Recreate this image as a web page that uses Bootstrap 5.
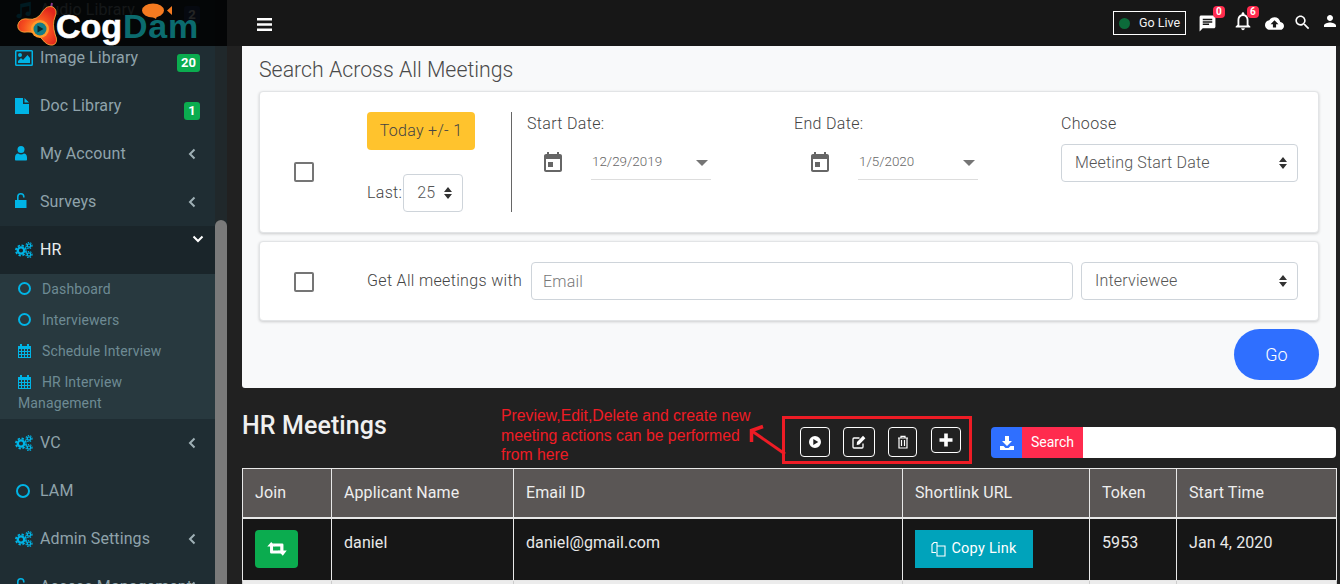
<!DOCTYPE html>
<html lang="en">
<head>
<meta charset="utf-8">
<title>HR Meetings</title>
<link href="https://cdn.jsdelivr.net/npm/bootstrap@5.3.0/dist/css/bootstrap.min.css" rel="stylesheet">
<style>
html,body{height:584px;overflow:hidden;background:#212121;font-family:Roboto,"Liberation Sans",sans-serif}
.shell{height:584px;overflow:hidden}
.side{width:227px;flex:none;position:relative;background:#1f2d33;overflow:hidden}
.side-list{width:215px;list-style:none;padding:0;margin:-14px 0 0}
.side-track{width:12px;background:#20282b}
.side-thumb{width:12px;height:364px;margin-top:220px;background:#7a7a7a;border-radius:7px 7px 0 0}
.side-item{height:48px;padding-left:15px;color:#8fa3ab;font-size:16px;letter-spacing:.1px;position:relative;white-space:nowrap}
.side-item .ic{width:18px;height:18px;fill:#00b4e6;margin-right:7px;flex:none}
.side-item.on{background:#1a252a;color:#e9eef0}
.chev{position:absolute;right:19px;width:8px;height:12px;stroke:#9fb0b6;fill:none;stroke-width:2}
.chev-d{position:absolute;right:11px;top:9px;width:12px;height:8px;stroke:#fff;fill:none;stroke-width:2}
.cnt{position:absolute;right:15px;top:20px;background:#0bac4f;color:#fff;font-size:13px;font-weight:700;line-height:18px;padding:0 4px;min-width:16px;text-align:center;border-radius:3px;letter-spacing:0}
.cnt-dim{background:#2b3f70}
.sub-list{background:#28393f;list-style:none;padding:0;margin:0;height:145px}
.sub-item{padding:5px 30px 0 18px;color:#6e8b94;font-size:14px;line-height:21px;letter-spacing:.12px;height:31px}
.sub-item.two{height:52px}
.sub-item .ic{width:13px;height:14px;fill:#00b4e6;margin-right:11px;vertical-align:-2px}
.ring{display:inline-block;width:13px;height:13px;border:2.5px solid #00b4e6;border-radius:50%;margin-right:11px;vertical-align:-1px}
.ring-lg{width:14px;height:14px;margin-right:10px;flex:none;margin-left:1px}
.logo{position:absolute;left:0;top:0;width:227px;height:46px;background:rgba(0,0,0,.86)}
.logo-mark{position:absolute;left:17px;top:2px;width:48px;height:44px}
.logo-bubble{position:absolute;left:142px;top:3px;width:30px;height:16px}
.logo-text{position:absolute;left:56px;top:6px;font-family:"Liberation Sans",sans-serif;font-weight:700;font-size:34px;line-height:40px;white-space:nowrap}
.logo-cog{color:#fff;-webkit-text-stroke:.6px #fff}
.logo-dam{color:#0b6b6e;margin-left:1px;letter-spacing:.7px}
.main-col{flex:1;min-width:0}
.topbar{height:46px;background:#171717;padding-left:30px}
.t-ic{fill:#fff;flex:none}
.burger{width:15px;height:13px;fill:#fff;margin-top:2px}
.golive{width:73px;height:24px;border:1px solid #fff;color:#f2f2f2;font-size:12.5px;padding-left:5px;gap:9px;margin-right:12px}
.live-dot{width:11px;height:11px;border-radius:50%;background:#0c6b3a}
.t-wrap{position:relative;display:block}
.t-badge{position:absolute;background:#ff2b4e;color:#fff;font-size:10px;font-weight:700;line-height:12px;padding:0 3px;border-radius:4px}
.main-body{padding:0 4px 0 15px}
.search-card{height:342px;background:#f8f9fa;padding:0 17px;border-radius:0 0 3px 3px}
.search-title{font-size:21.3px;font-weight:300;color:#4a4a4a;line-height:47px;height:45px;margin:0}
.pane{background:#fff;border:1px solid #e2e4e6;border-radius:4px;box-shadow:0 1px 3px rgba(0,0,0,.18)}
.pane-a{height:142px;margin-bottom:8px}
.pane-b{height:80px;margin-bottom:8px}
.chk{width:20px;height:20px;border:2px solid #757575;border-radius:2px;background:#fff;margin:1px 0 0 34px;flex:none;appearance:none}
.chk-low{margin-top:70px}
.col-quick{width:144px;margin-left:53px;flex:none;padding-top:20px}
.today{width:108px;height:38px;background:#ffc32d;border:0;border-radius:4px;color:#444;font-size:16px;font-weight:300;padding:0;letter-spacing:.3px}
.lbl{color:#444;font-size:16px;font-weight:300;letter-spacing:.33px}
.pick-sel{height:38px;border:1px solid #ced4da;border-radius:4px;color:#555;font-size:16px;font-weight:300;letter-spacing:.2px;padding:0 30px 0 13px;background-color:#fff;background-size:8px 12px;background-position:right 10px center;background-image:url("data:image/svg+xml,%3Csvg xmlns='http://www.w3.org/2000/svg' viewBox='0 0 8 12'%3E%3Cpath d='M4 0l4 5H0zM4 12L0 7h8z' fill='%23333'/%3E%3C/svg%3E")}
.sel-last{width:60px;margin-left:1px;padding-left:13px;padding-right:0;letter-spacing:0}
.col-line{width:1px;height:100px;background:#666;margin-top:20px;flex:none}
.col-date{width:267px;flex:none;padding-top:20px}
.col-date.first{margin-left:15px}
.date-row{margin-top:10px;padding-left:16px}
.cal{width:24px;height:24px;fill:#666;flex:none;margin-left:-2px}
.date-box{width:120px;height:34px;margin-left:26px;border-bottom:1px solid #ddd;color:#666;font-size:13.4px;font-weight:300;padding-left:1px;padding-right:3px}
.tri{width:0;height:0;border:6px solid transparent;border-top-color:#757575;border-bottom:0}
.col-choose{width:237px;flex:none;padding-top:20px}
.sel-wide{width:237px;margin-top:8px}
.mail-input{height:38px;width:542px;border:1px solid #ced4da;border-radius:4px;font-size:16px;font-weight:300;letter-spacing:.2px;padding:0 11px;color:#555}
.mail-input::placeholder{color:#777}
.sel-role{width:217px;margin-left:8px}
.lbl-mail{margin-left:53px;width:164px;flex:none}
.go{width:85px;height:51px;background:#2f6fff;border:0;border-radius:26px;color:#fff;font-size:18px;font-weight:300;padding:0}
.head-row{height:80px}
.hr-title{font-size:25px;font-weight:500;color:#f0f0f0;margin:0;width:259px;flex:none;line-height:76px;letter-spacing:.1px}
.note{color:#ee1c25;font-family:"Liberation Sans",sans-serif;font-size:15.8px;line-height:19.7px;width:281px;flex:none;padding:18px 20px 0 0}
.act-box{width:190px;height:48px;border:3px solid #ee1c25;margin-top:28px;padding:8px 0 0 15px;flex:none;position:relative}
.act-btn{height:30px;border:1px solid #fff;border-radius:4px;background:transparent;padding:0;display:flex;align-items:center;justify-content:center;flex:none}
.a-ic{fill:#fff;width:16px;height:16px}
.arrow{position:absolute;left:-36px;top:5px;width:36px;height:32px;overflow:visible;stroke:#ee1c25;fill:none;stroke-width:3}
.find{width:345px;height:31px;margin:39px 0 0 19px;flex:none;border-radius:4px;overflow:hidden}
.find-dl{width:31px;background:#2f6fff;border:0;padding:0}
.find-lbl{width:61px;background:#ff2b4e;color:#fff;font-size:14px;line-height:31px;text-align:center}
.find-in{flex:1;border:0;background:#fff;min-width:0}
.grid-table{table-layout:fixed;width:1094px;border-collapse:collapse;margin:0;color:#e9e9e9;font-size:16px;letter-spacing:.1px}
.grid-table th,.grid-table td{border:1px solid #e8e8e8;padding:0 12px;vertical-align:top}
.grid-table th{background:#5a5655;height:49px;font-weight:400;vertical-align:middle;border-bottom-width:2px;color:#eee}
.grid-table td{background:#161616;height:63px;padding-top:12px}
.grid-table .row-alt td{background:#ececec;height:40px;border-color:#ccc}
.join{width:43px;height:38px;background:#0bac4f;border:0;border-radius:4px;padding:0;display:flex;align-items:center;justify-content:center}
.copy{width:118px;height:38px;background:#00a3bb;border:0;border-radius:0;color:#fff;font-size:14.5px;padding:1px 0 0;letter-spacing:.25px}
.grid-table .td-btn{padding-top:11px}
</style>
</head>
<body>
<svg width="0" height="0" class="position-absolute">
<defs>
<symbol id="i-music" viewBox="0 0 24 24"><path d="M21 1v16a3.500 3 0 1 1-2-2.700V6.500L9 8.500V20a3.500 3 0 1 1-2-2.700V4z"/></symbol>
<symbol id="i-image" viewBox="0 0 18 16"><path fill-rule="evenodd" d="M1.500 0h15A1.500 1.500 0 0 1 18 1.500v13a1.500 1.500 0 0 1-1.500 1.500h-15A1.500 1.500 0 0 1 0 14.500v-13A1.500 1.500 0 0 1 1.500 0zM1.500 1.500v13h15v-13zM5 3a2 2 0 1 1 0 4 2 2 0 0 1 0-4zM3 13v-2l3-3 2 2 4.500-5L15 8v5z"/></symbol>
<symbol id="i-file" viewBox="0 0 18 18"><path d="M0 1h8v6h6v10H0z M9.500 1l4.500 4.500H9.500z"/></symbol>
<symbol id="i-user" viewBox="0 0 18 18"><circle cx="6" cy="4.500" r="3.500"/><path d="M1 15.500c-.6 0-1-.4-1-1v-2C0 10 1.500 8.500 3 8.500c.9.700 2 1.100 3 1.100s2.100-.4 3-1.100c1.500 0 3 1.500 3 4v2c0 .6-.4 1-1 1z"/></symbol>
<symbol id="i-lock" viewBox="0 0 18 18"><path d="M0 7h11.500v8H0z"/><path d="M2 7V3.800a3.800 3.800 0 0 1 7.600 0V4.500H8V3.800a2.200 2.200 0 0 0-4.400 0V7z"/></symbol>
<symbol id="i-cogs" viewBox="0 0 18 16"><g fill="none" stroke="#00b4e6"><circle cx="6" cy="8.500" r="3.200" stroke-width="2.300"/><circle cx="6" cy="8.500" r="5.100" stroke-width="1.700" stroke-dasharray="2.300 1.700"/><circle cx="14" cy="3.500" r="1.700" stroke-width="1.300"/><circle cx="14" cy="3.500" r="3" stroke-width="1.200" stroke-dasharray="1.400 1.100"/><circle cx="14" cy="12.500" r="1.700" stroke-width="1.300"/><circle cx="14" cy="12.500" r="3" stroke-width="1.200" stroke-dasharray="1.400 1.100"/></g></symbol>
<symbol id="i-cal" viewBox="0 0 13 14"><path fill-rule="evenodd" d="M2 0h2v2h5V0h2v2h2v12H0V2h2zM1 5v2h2V5zm3 0v2h2V5zm3 0v2h2V5zm3 0v2h2V5zM1 8v2h2V8zm3 0v2h2V8zm3 0v2h2V8zm3 0v2h2V8zM1 11v2h2v-2zm3 0v2h2v-2zm3 0v2h2v-2zm3 0v2h2v-2z"/></symbol>
<symbol id="m-cal" viewBox="0 0 24 24"><path d="M7 11h5v5H7zM16 1v2H8V1H6v2H5c-1.110 0-1.990.9-1.990 2L3 19c0 1.100.89 2 2 2h14c1.100 0 2-.9 2-2V5c0-1.100-.9-2-2-2h-1V1h-2zm3 18H5V8h14v11z"/></symbol>
</defs>
</svg>
<div class="shell d-flex">
  <aside class="side d-flex">
    <ul class="side-list">
      <li class="side-item d-flex align-items-center"><svg class="ic"><use href="#i-music"/></svg>Audio Library<span class="cnt cnt-dim">2</span></li>
      <li class="side-item d-flex align-items-center"><svg class="ic"><use href="#i-image"/></svg>Image Library<span class="cnt">20</span></li>
      <li class="side-item d-flex align-items-center"><svg class="ic"><use href="#i-file"/></svg>Doc Library<span class="cnt">1</span></li>
      <li class="side-item d-flex align-items-center"><svg class="ic"><use href="#i-user"/></svg>My Account<svg class="chev" viewBox="0 0 8 12"><path d="M6.500 1.500L2 6l4.500 4.500"/></svg></li>
      <li class="side-item d-flex align-items-center"><svg class="ic"><use href="#i-lock"/></svg>Surveys<svg class="chev" viewBox="0 0 8 12"><path d="M6.500 1.500L2 6l4.500 4.500"/></svg></li>
      <li class="side-item on d-flex align-items-center"><svg class="ic"><use href="#i-cogs"/></svg>HR<svg class="chev-d" viewBox="0 0 12 8"><path d="M1.500 1.500L6 6l4.500-4.500"/></svg></li>
      <li>
        <ul class="sub-list">
          <li class="sub-item"><span class="ring"></span>Dashboard</li>
          <li class="sub-item"><span class="ring"></span>Interviewers</li>
          <li class="sub-item"><svg class="ic"><use href="#i-cal"/></svg>Schedule Interview</li>
          <li class="sub-item two"><svg class="ic"><use href="#i-cal"/></svg>HR Interview Management</li>
        </ul>
      </li>
      <li class="side-item d-flex align-items-center"><svg class="ic"><use href="#i-cogs"/></svg>VC<svg class="chev" viewBox="0 0 8 12"><path d="M6.500 1.500L2 6l4.500 4.500"/></svg></li>
      <li class="side-item d-flex align-items-center"><span class="ring ring-lg"></span>LAM</li>
      <li class="side-item d-flex align-items-center"><svg class="ic"><use href="#i-cogs"/></svg>Admin Settings<svg class="chev" viewBox="0 0 8 12"><path d="M6.500 1.500L2 6l4.500 4.500"/></svg></li>
      <li class="side-item d-flex align-items-center"><svg class="ic"><use href="#i-lock"/></svg>Access Management<svg class="chev" viewBox="0 0 8 12"><path d="M6.500 1.500L2 6l4.500 4.500"/></svg></li>
    </ul>
    <div class="side-track"><div class="side-thumb"></div></div>
    <div class="logo">
      <svg class="logo-mark" viewBox="0 0 48 44">
        <defs><radialGradient id="lg" cx=".48" cy=".58" r=".6"><stop offset="0" stop-color="#ffa02e"/><stop offset=".55" stop-color="#f6501f"/><stop offset="1" stop-color="#e0261c"/></radialGradient></defs>
        <path d="M35 1c-1 3-.5 8 1 12" fill="none" stroke="#8a3a8a" stroke-width="2"/>
        <path d="M2 20Q5 16 11 17 20 19 26 9 30 3 36 5 41 8 38 15 35 22 38 32 42 41 36 43 30 44 25 37 18 29 10 30 3 31 1 26 0 23 2 20Z" fill="url(#lg)" stroke="#ffb13a" stroke-width=".8"/>
        <circle cx="23" cy="27" r="9" fill="#ff9a2a"/><circle cx="23" cy="27" r="6.500" fill="#127d86"/>
        <path d="M20.500 23.500l6 3.500-6 3.500z" fill="#06282c"/>
      </svg>
      <div class="logo-text"><span class="logo-cog">Cog</span><span class="logo-dam">Dam</span></div>
      <svg class="logo-bubble" viewBox="0 0 30 16"><ellipse cx="11" cy="7.500" rx="11" ry="7" fill="#f47a20"/><path d="M9 13l5 3 1-3z" fill="#f47a20"/><path d="M30 3v9l-5-4.500z" fill="#f47a20"/></svg>
    </div>
  </aside>
  <div class="main-col">
    <header class="topbar d-flex align-items-center">
      <svg class="burger" viewBox="0 0 15 13"><path d="M0 0h15v2.600H0zM0 5.200h15v2.600H0zM0 10.400h15V13H0z"/></svg>
      <div class="golive d-flex align-items-center ms-auto"><span class="live-dot"></span><span>Go Live</span></div>
      <span class="t-wrap" style="margin-top:1px"><svg class="t-ic d-block" width="19" height="19" viewBox="0 0 24 24"><path d="M20 2H4c-1.100 0-1.990.9-1.990 2L2 22l4-4h14c1.100 0 2-.9 2-2V4c0-1.100-.9-2-2-2zM6 9h12v2H6V9zm8 5H6v-2h8v2zm4-6H6V6h12v2z"/></svg><span class="t-badge" style="left:15px;top:-8px">0</span></span>
      <span class="t-wrap" style="margin-left:15px;margin-top:-4px"><svg class="t-ic d-block" width="22" height="22" viewBox="0 0 24 24"><path d="M12 22c1.100 0 2-.9 2-2h-4c0 1.100.89 2 2 2zm6-6v-5c0-3.070-1.640-5.640-4.500-6.320V4c0-.83-.67-1.500-1.500-1.500s-1.500.67-1.500 1.500v.68C7.630 5.360 6 7.920 6 11v5l-2 2v1h16v-1l-2-2zm-2 1H8v-6c0-2.480 1.510-4.500 4-4.500s4 2.020 4 4.500v6z"/></svg><span class="t-badge" style="left:15px;top:-4px">6</span></span>
      <svg class="t-ic" style="margin-left:11px" width="19" height="19" viewBox="0 0 24 24"><path d="M19.350 10.040C18.670 6.590 15.640 4 12 4 9.110 4 6.600 5.640 5.350 8.040 2.340 8.360 0 10.910 0 14c0 3.310 2.690 6 6 6h13c2.760 0 5-2.240 5-5 0-2.640-2.050-4.780-4.650-4.960zM14 13v4h-4v-4H7l5-5 5 5h-3z"/></svg>
      <svg class="t-ic" style="margin-left:9px;margin-top:-1px" width="19" height="19" viewBox="0 0 24 24"><path d="M15.500 14h-.79l-.28-.27C15.410 12.590 16 11.110 16 9.500 16 5.910 13.090 3 9.500 3S3 5.910 3 9.500 5.910 16 9.500 16c1.610 0 3.090-.59 4.230-1.570l.27.28v.79l5 4.990L20.490 19l-4.990-5zm-6 0C7.010 14 5 11.990 5 9.500S7.010 5 9.500 5 14 7.010 14 9.500 11.990 14 9.500 14z"/></svg>
      <svg class="t-ic" style="margin-left:9px;margin-right:1px;margin-top:-4px" width="18" height="18" viewBox="0 0 24 24"><path d="M12 12c2.210 0 4-1.790 4-4s-1.790-4-4-4-4 1.790-4 4 1.790 4 4 4zm0 2c-2.670 0-8 1.340-8 4v2h16v-2c0-2.660-5.330-4-8-4z"/></svg>
    </header>
    <div class="main-body">
      <section class="search-card">
        <h5 class="search-title">Search Across All Meetings</h5>
        <div class="pane pane-a d-flex">
          <input class="chk chk-low" type="checkbox" aria-label="Use date range">
          <div class="col-quick">
            <button class="today d-block" type="button">Today +/- 1</button>
            <div class="d-flex align-items-center" style="margin-top:24px"><span class="lbl">Last:</span><select class="form-select pick-sel sel-last" aria-label="Last"><option>25</option></select></div>
          </div>
          <div class="col-line"></div>
          <div class="col-date first">
            <div class="lbl">Start Date:</div>
            <div class="date-row d-flex align-items-center"><svg class="cal"><use href="#m-cal"/></svg><div class="date-box d-flex align-items-center justify-content-between"><span>12/29/2019</span><span class="tri"></span></div></div>
          </div>
          <div class="col-date">
            <div class="lbl">End Date:</div>
            <div class="date-row d-flex align-items-center"><svg class="cal"><use href="#m-cal"/></svg><div class="date-box d-flex align-items-center justify-content-between"><span>1/5/2020</span><span class="tri"></span></div></div>
          </div>
          <div class="col-choose">
            <div class="lbl">Choose</div>
            <select class="form-select pick-sel sel-wide" aria-label="Choose"><option>Meeting Start Date</option></select>
          </div>
        </div>
        <div class="pane pane-b d-flex align-items-center">
          <input class="chk" type="checkbox" aria-label="Use email">
          <span class="lbl lbl-mail">Get All meetings with</span>
          <input class="mail-input" type="text" placeholder="Email">
          <select class="form-select pick-sel sel-role" aria-label="Role"><option>Interviewee</option></select>
        </div>
        <div class="d-flex justify-content-end"><button class="go" type="button">Go</button></div>
      </section>
      <div class="head-row d-flex">
        <h3 class="hr-title">HR Meetings</h3>
        <div class="note">Preview,Edit,Delete and create new meeting actions can be performed from here</div>
        <div class="act-box d-flex align-items-start">
          <svg class="arrow" viewBox="0 0 36 32"><path d="M36 30L3 7"/><path d="M2.500 18V6.500L14 2.500" stroke-width="3.500"/></svg>
          <button class="act-btn" style="width:30px" type="button" aria-label="Preview"><svg class="a-ic" viewBox="0 0 16 16"><path fill-rule="evenodd" d="M8 2a6 6 0 1 1 0 12A6 6 0 0 1 8 2zM6.300 5v6l5-3z"/></svg></button>
          <button class="act-btn" style="width:32px;margin-left:13px" type="button" aria-label="Edit"><svg class="a-ic" viewBox="0 0 16 16"><path d="M12 9.500V13a1 1 0 0 1-1 1H3a1 1 0 0 1-1-1V5a1 1 0 0 1 1-1h5.500" fill="none" stroke="#fff" stroke-width="1.300"/><path d="M6 8l6-6.200 2.400 2.400L8.300 10.400 5.700 11z"/></svg></button>
          <button class="act-btn" style="width:29px;margin-left:13px" type="button" aria-label="Delete"><svg class="a-ic" viewBox="0 0 16 16"><path d="M3 4h10M6 4V2.300h4V4M4 4v10h8V4M6.500 6v6M9.500 6v6" fill="none" stroke="#fff" stroke-width="1.200"/></svg></button>
          <button class="act-btn" style="width:30px;height:26px;margin-left:14px" type="button" aria-label="Create"><svg class="a-ic" viewBox="0 0 16 16"><path d="M6.200 1.500h3.600v4.700h4.700v3.600H9.800v4.700H6.200V9.800H1.500V6.200h4.700z"/></svg></button>
        </div>
        <div class="find d-flex">
          <button class="find-dl d-flex align-items-center justify-content-center" type="button" aria-label="Download"><svg class="a-ic" viewBox="0 0 16 16"><path d="M6 1h4v5h3L8 11 3 6h3z"/><path d="M1 11h3.500L6.500 13h3L11.500 11H15v4H1z"/></svg></button>
          <span class="find-lbl">Search</span>
          <input class="find-in" type="text" aria-label="Search">
        </div>
      </div>
      <table class="grid-table">
        <colgroup><col style="width:89px"><col style="width:182px"><col style="width:389px"><col style="width:187px"><col style="width:87px"><col style="width:160px"></colgroup>
        <thead><tr><th>Join</th><th>Applicant Name</th><th>Email ID</th><th>Shortlink URL</th><th>Token</th><th>Start Time</th></tr></thead>
        <tbody><tr>
          <td class="td-btn"><button class="join" type="button" aria-label="Join"><svg width="20" height="14" viewBox="0 0 19.500 14" fill="#fff"><path d="M4 0L8 4.500H5.800V8.500H12L15 11.500H4A1.200 1.200 0 0 1 2.800 10.300V4.500H0z"/><path d="M15.500 13.800L11 8.500H13V4.500H7.500L5 1.500H15A1.200 1.200 0 0 1 16.200 2.700V8.500H19.500z"/></svg></button></td>
          <td>daniel</td>
          <td>daniel@gmail.com</td>
          <td class="td-btn"><button class="copy d-flex align-items-center justify-content-center gap-1" type="button"><svg width="16" height="16" viewBox="0 0 16 16" fill="none" stroke="#fff" stroke-width="1.100"><path d="M6 4.500V1.500H3L1 3.500v8h4M6 5h8v10H6z"/></svg>Copy Link</button></td>
          <td>5953</td>
          <td>Jan 4, 2020</td>
        </tr>
        <tr class="row-alt"><td></td><td></td><td></td><td></td><td></td><td></td></tr></tbody>
      </table>
    </div>
  </div>
</div>
<script src="https://cdn.jsdelivr.net/npm/bootstrap@5.3.0/dist/js/bootstrap.bundle.min.js"></script>
</body>
</html>
